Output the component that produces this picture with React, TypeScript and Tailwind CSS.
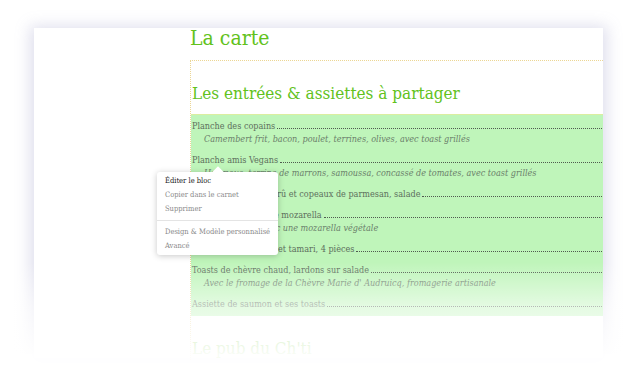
const serif = { fontFamily: '"DejaVu Serif Condensed", "DejaVu Serif", serif' }

type Dish = { name: string; desc?: string }

const dishes: Dish[] = [
  { name: 'Planche des copains', desc: 'Camembert frit, bacon, poulet, terrines, olives, avec toast grillés' },
  { name: 'Planche amis Vegans', desc: 'Houmous, terrine de marrons, samoussa, concassé de tomates, avec toast grillés' },
  { name: 'Carpaccio de bœuf crû et copeaux de parmesan, salade' },
  { name: 'Tartines fines tomate mozarella', desc: 'Option vegan avec une mozarella végétale' },
  { name: 'Gyozas aux légumes et tamari, 4 pièces' },
  { name: 'Toasts de chèvre chaud, lardons sur salade', desc: "Avec le fromage de la Chèvre Marie d' Audruicq, fromagerie artisanale" },
  { name: 'Assiette de saumon et ses toasts' },
]

function DishRow({ dish }: { dish: Dish }) {
  return (
    <div className="mb-2 last:mb-0">
      <div className="flex items-end h-[13px] text-[9px] leading-[13px] text-[#5d6f5d]">
        <span className="whitespace-nowrap pr-[2px]">{dish.name}</span>
        <span className="flex-1 border-b border-dotted border-[#4f5b4f] mb-[4px]" />
      </div>
      {dish.desc && (
        <div className="h-[13px] pl-[12px] text-[9px] leading-[13px] italic text-[#6b7f6b] whitespace-nowrap">
          {dish.desc}
        </div>
      )}
    </div>
  )
}

function ContextMenu() {
  return (
    <div className="absolute left-[157px] top-[172px] w-[121px] rounded-[3px] bg-white py-[2px] shadow-[0_1px_6px_rgba(0,0,0,0.22)] text-[7.5px] leading-[14px] whitespace-nowrap">
      <div className="absolute -top-[4px] left-[57px] w-[8px] h-[8px] rotate-45 bg-white" />
      <div className="relative px-[8px] text-[#222]">Éditer le bloc</div>
      <div className="px-[8px] text-[#8a8a8a]">Copier dans le carnet</div>
      <div className="px-[8px] text-[#8a8a8a]">Supprimer</div>
      <div className="my-[4px] border-t border-[#e4e4e4]" />
      <div className="px-[8px] text-[#8a8a8a]">Design &amp; Modèle personnalisé</div>
      <div className="px-[8px] text-[#8a8a8a]">Avancé</div>
    </div>
  )
}

export default function App() {
  return (
    <div className="relative w-[639px] h-[382px] overflow-hidden bg-white" style={serif}>
      <div className="pt-[30px] pl-[34px] pr-[36px]">
        <div className="h-[330px] bg-white shadow-[0_2px_14px_4px_rgba(140,140,190,0.28)] pl-[156px]">
          <h1 className="h-[32px] -mt-[2px] text-[21px] leading-[20px] text-[#62c21c]">La carte</h1>
          <div className="border-l border-t border-dotted border-[#ecd694]">
            <h2 className="h-[53px] pt-[20px] text-[17px] leading-[24px] text-[#62c21c] pl-[1px]">
              Les entrées &amp; assiettes à partager
            </h2>
            <div className="bg-[#bff5ba] border-t border-[#dbeea0] px-[1px] py-[5px]">
              {dishes.map((d) => (
                <DishRow key={d.name} dish={d} />
              ))}
            </div>
            <div className="h-[20px]" />
            <h2 className="text-[17px] leading-[24px] text-[#62c21c] pl-[1px]">Le pub du Ch'ti</h2>
          </div>
        </div>
      </div>
      <div className="absolute left-0 right-0 top-[262px] h-[92px] bg-gradient-to-b from-white/0 via-white/60 to-white/95" />
      <div className="absolute left-0 right-0 top-[354px] bottom-0 bg-white/95" />
      <ContextMenu />
    </div>
  )
}
